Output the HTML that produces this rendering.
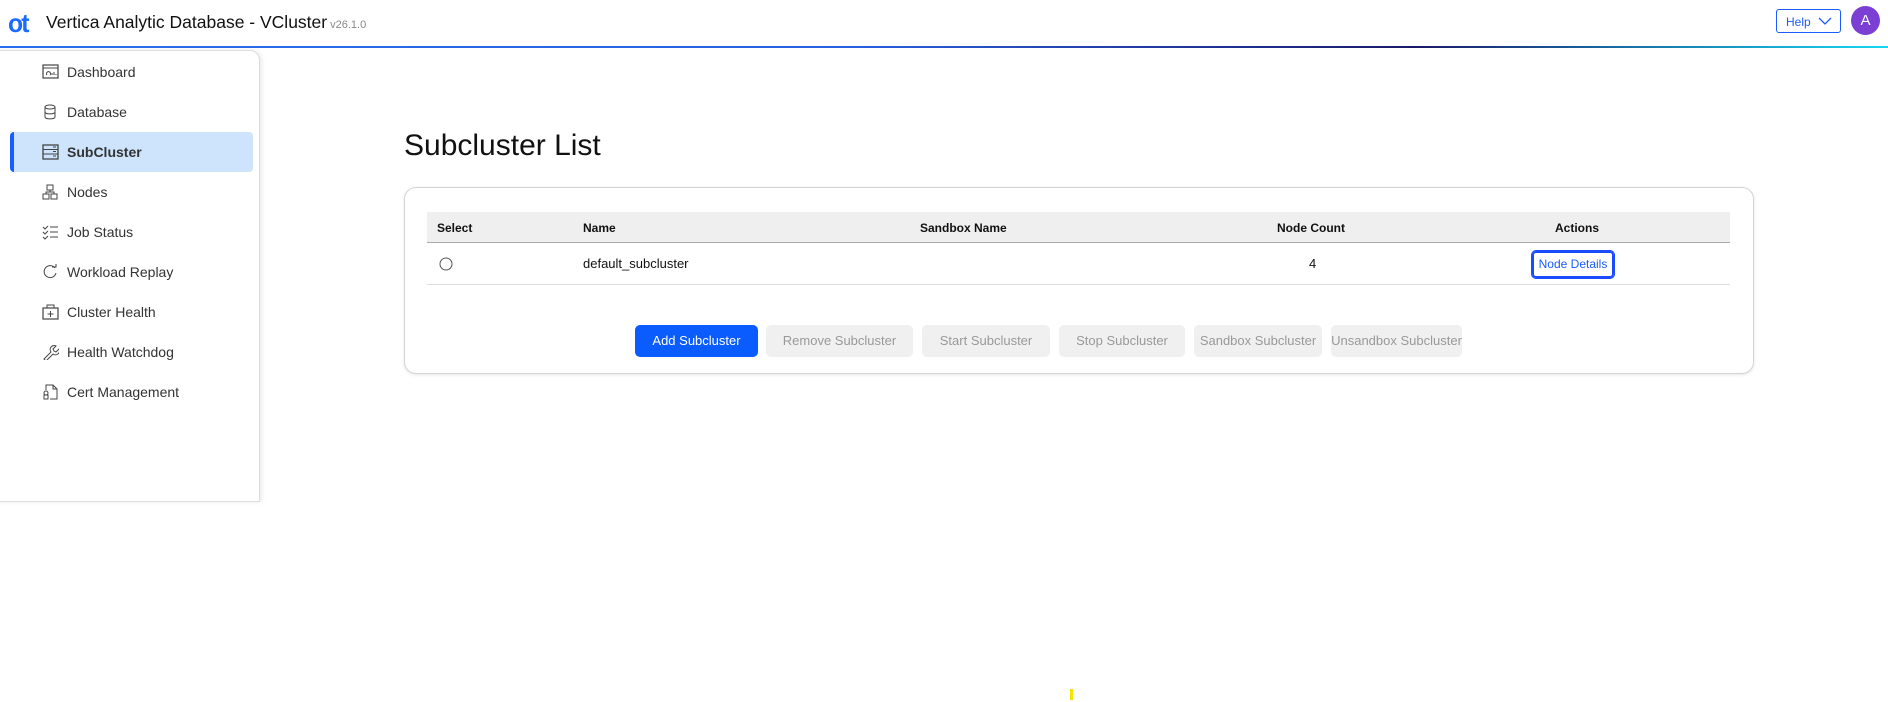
<!DOCTYPE html>
<html><head><meta charset="utf-8"><style>
*{box-sizing:border-box;margin:0;padding:0}
body{width:1888px;height:702px;background:#fff;font-family:"Liberation Sans",Arial,sans-serif;color:#222;position:relative;overflow:hidden}
.hdr{position:absolute;left:0;top:0;width:1888px;height:47px;background:#fff}
.line{position:absolute;left:0;top:46px;width:1888px;height:2px;background:linear-gradient(90deg,#2a6ff0 0%,#2a5fe0 45%,#1a1a6a 75%,#15d8f0 100%)}
.logo{position:absolute;left:8px;top:10px;font-weight:bold;font-size:26px;color:#1a6cff;letter-spacing:-2px;line-height:26px;transform:scaleX(0.95);transform-origin:left}
.title{position:absolute;left:46px;top:12px;font-size:17.5px;color:#111;white-space:nowrap}
.title small{font-size:11px;color:#888;margin-left:3px}
.help{position:absolute;left:1776px;top:9px;width:65px;height:24px;border:1px solid #1a5cff;border-radius:3px;color:#1a5cff;font-size:12px;padding:5px 0 0 9px}
.av{position:absolute;left:1851px;top:6px;width:29px;height:29px;border-radius:50%;background:#7b3fd4;color:#fff;font-size:15px;text-align:center;line-height:29px}
.side{position:absolute;left:-10px;top:50px;width:270px;height:452px;border:1px solid #ddd;border-radius:0 10px 0 0;box-shadow:2px 0 4px rgba(0,0,0,.08)}
.nav{position:absolute;left:10px;width:243px;height:40px;font-size:14px;color:#333;line-height:40px;padding-left:57px;white-space:nowrap}
.nav svg{position:absolute;left:32px;top:12px}
.nav.sel{background:#cde4fc;border-left:4px solid #1a5cff;border-radius:4px;font-weight:bold;padding-left:53px}
.nav.sel svg{left:28px}
h1{position:absolute;left:404px;top:129px;font-size:30px;font-weight:normal;color:#111}
.card{position:absolute;left:404px;top:187px;width:1350px;height:187px;border:1px solid #d4d4d4;border-radius:12px;box-shadow:0 1px 3px rgba(0,0,0,.1)}
.th{position:absolute;left:427px;top:212px;width:1303px;height:31px;background:#efefef;border-bottom:1px solid #aaa}
.tr{position:absolute;left:427px;top:243px;width:1303px;height:42px;border-bottom:1px solid #ddd}
.c{position:absolute;font-size:12px;font-weight:bold;color:#111;top:9px}
.d{position:absolute;font-size:13px;color:#111;top:13px}
.nd{position:absolute;left:1532px;top:251px;width:82px;height:27px;border:2px solid #1a4cff;border-radius:4px;box-shadow:inset 0 0 0 1px #fff,0 0 0 1px #1a4cff;color:#1a5cff;font-size:12px;text-align:center;line-height:23px;white-space:nowrap}
.b{position:absolute;top:325px;height:32px;border-radius:5px;background:#f0f0f0;color:#999;font-size:13px;text-align:center;line-height:32px;white-space:nowrap;overflow:hidden}
.b.p{background:#0a5cff;color:#fff}
</style></head><body>
<div class="hdr"><div class="logo">ot</div><div class="title">Vertica Analytic Database - VCluster<small>v26.1.0</small></div>
<div class="help">Help <svg width="14" height="9" viewBox="0 0 14 9" style="margin-left:4px"><path d="M1 1l6 6 6-6" fill="none" stroke="#1a5cff" stroke-width="1.3"/></svg></div>
<div class="av">A</div></div>
<div class="line"></div>
<div class="side"></div>
<div class="nav" style="top:52px"><svg width="17" height="16"><rect x="1" y="1" width="15" height="13" fill="none" stroke="#444" stroke-width="1.2"/><path d="M1 4h15M5 11a2 2 0 1 1 3 0M10 11v-2M12 11v-3M14 11v-1" stroke="#444" fill="none"/></svg>Dashboard</div>
<div class="nav" style="top:92px"><svg width="17" height="16"><ellipse cx="8" cy="3" rx="5" ry="2" fill="none" stroke="#444"/><path d="M3 3v10c0 2.5 10 2.5 10 0V3M3 8c0 2.5 10 2.5 10 0" fill="none" stroke="#444"/></svg>Database</div>
<div class="nav sel" style="top:132px"><svg width="17" height="16"><rect x="1" y="1" width="15" height="14" fill="none" stroke="#444" stroke-width="1.3"/><path d="M1 5.5h15M1 10h15M11 3h3M11 7.5h3M11 12h3" stroke="#444"/></svg>SubCluster</div>
<div class="nav" style="top:172px"><svg width="17" height="16"><rect x="5" y="1" width="6" height="5" fill="none" stroke="#444"/><rect x="1" y="10" width="6" height="5" fill="none" stroke="#444"/><rect x="9" y="10" width="6" height="5" fill="none" stroke="#444"/><path d="M8 6v2M4 10V8h8v2" fill="none" stroke="#444"/></svg>Nodes</div>
<div class="nav" style="top:212px"><svg width="17" height="16"><path d="M1 3l2 2 3-3M1 8l2 2 3-3M1 13l2 2 3-3M8 3h8M8 8h8M8 13h8" fill="none" stroke="#444"/></svg>Job Status</div>
<div class="nav" style="top:252px"><svg width="17" height="16"><path d="M13 4A6 6 0 1 0 14 9" fill="none" stroke="#444"/><path d="M10 3h4V0" fill="none" stroke="#444"/></svg>Workload Replay</div>
<div class="nav" style="top:292px"><svg width="17" height="16"><rect x="1" y="4" width="15" height="11" fill="none" stroke="#444" stroke-width="1.2"/><path d="M5 4V1h7v3M8.5 7v6M5.5 10h6" fill="none" stroke="#444"/></svg>Cluster Health</div>
<div class="nav" style="top:332px"><svg width="17" height="16"><path d="M2 15l7-7a4 4 0 0 1 5-6l-3 3 1 2 2 1 3-3a4 4 0 0 1-6 5l-7 7z" fill="none" stroke="#444"/></svg>Health Watchdog</div>
<div class="nav" style="top:372px"><svg width="17" height="16"><path d="M4 6V1h7l4 4v10H8M11 1v4h4" fill="none" stroke="#444"/><circle cx="4" cy="9" r="2" fill="none" stroke="#444"/><rect x="2" y="11" width="4" height="4" fill="none" stroke="#444"/></svg>Cert Management</div>
<h1>Subcluster List</h1>
<div class="card"></div>
<div class="th"><span class="c" style="left:10px">Select</span><span class="c" style="left:156px">Name</span><span class="c" style="left:493px">Sandbox Name</span><span class="c" style="left:850px">Node Count</span><span class="c" style="left:1128px">Actions</span></div>
<div class="tr"><svg style="position:absolute;left:12px;top:14px" width="14" height="14"><circle cx="7" cy="7" r="6" fill="#fff" stroke="#555"/></svg><span class="d" style="left:156px">default_subcluster</span><span class="d" style="left:882px">4</span></div>
<div class="nd">Node Details</div>
<div class="b p" style="left:635px;width:123px">Add Subcluster</div>
<div class="b" style="left:766px;width:147px">Remove Subcluster</div>
<div class="b" style="left:922px;width:128px">Start Subcluster</div>
<div class="b" style="left:1059px;width:126px">Stop Subcluster</div>
<div class="b" style="left:1194px;width:128px">Sandbox Subcluster</div>
<div class="b" style="left:1331px;width:131px">Unsandbox Subcluster</div>
<div style="position:absolute;left:1070px;top:689px;width:3px;height:11px;background:#f5e400"></div>
</body></html>
